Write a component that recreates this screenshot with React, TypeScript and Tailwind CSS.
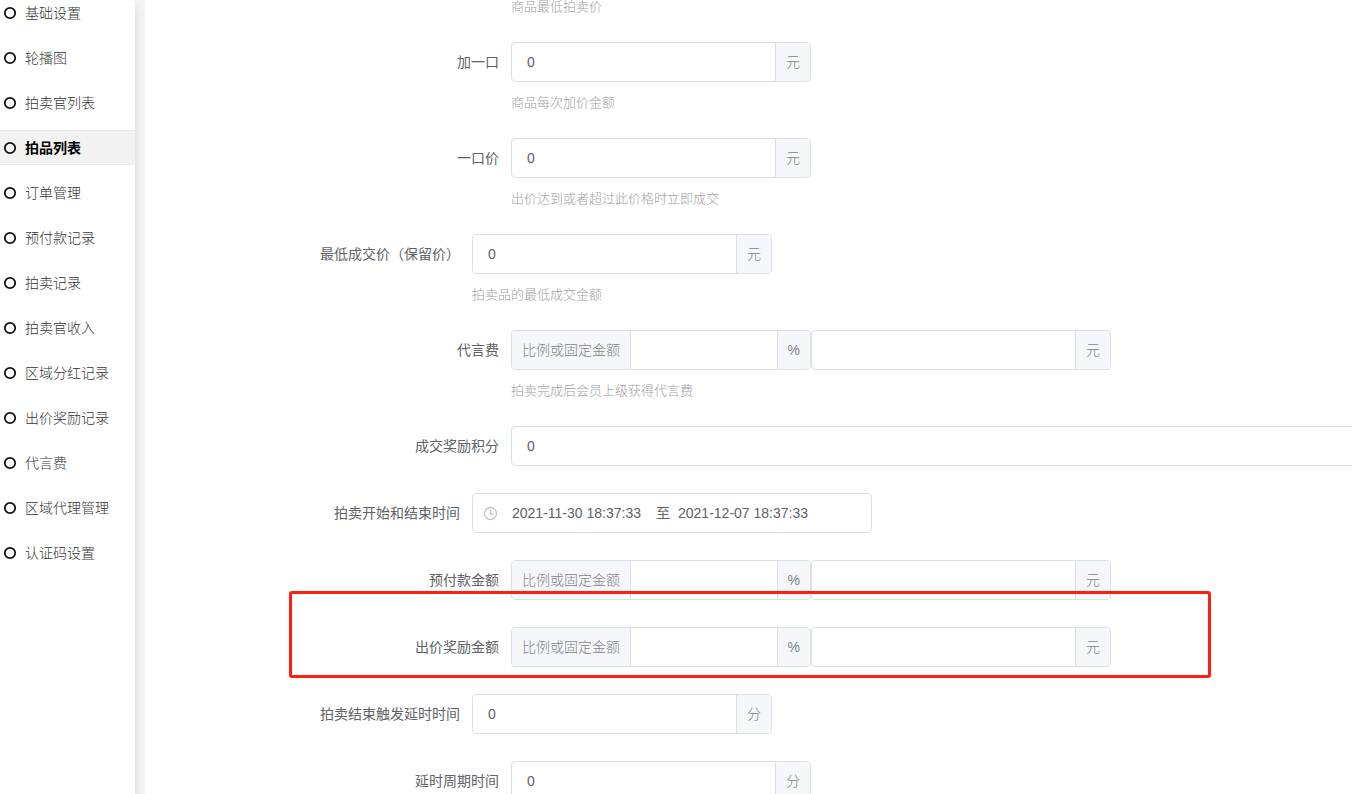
import { ReactNode } from "react";

const menu = [
  "基础设置",
  "轮播图",
  "拍卖官列表",
  "拍品列表",
  "订单管理",
  "预付款记录",
  "拍卖记录",
  "拍卖官收入",
  "区域分红记录",
  "出价奖励记录",
  "代言费",
  "区域代理管理",
  "认证码设置",
];

const Addon = ({ children, side = "right" }: { children: ReactNode; side?: "left" | "right" }) => (
  <span
    className={`flex shrink-0 items-center border-[#dcdfe6] bg-[#f5f7fa] px-[10px] font-light text-[#7f8288] ${
      side === "left" ? "border-r" : "border-l"
    }`}
  >
    {children}
  </span>
);

const InputGroup = ({
  id,
  label,
  value,
  prepend,
  append,
}: {
  id: string;
  label?: string;
  value?: string;
  prepend?: string;
  append: string;
}) => (
  <div className="flex h-10 w-[300px] shrink-0 overflow-hidden rounded border border-[#dcdfe6] bg-white">
    {prepend && <Addon side="left">{prepend}</Addon>}
    <input
      id={id}
      type="text"
      aria-label={label}
      defaultValue={value}
      className="min-w-0 flex-1 px-[15px] text-[#606266] outline-none"
    />
    <Addon>{append}</Addon>
  </div>
);

const FormItem = ({
  id,
  label,
  help,
  narrow,
  marked,
  children,
}: {
  id: string;
  label: string;
  help?: string;
  narrow?: boolean;
  marked?: boolean;
  children: ReactNode;
}) => (
  <div className="relative mb-[27px] flex">
    <label
      htmlFor={id}
      className={`h-10 shrink-0 pr-3 text-right leading-10 text-[#606266] ${narrow ? "w-[327px]" : "w-[366px]"}`}
    >
      {label}
    </label>
    <div className="min-w-0 flex-1">
      <div className="flex">{children}</div>
      {help && <p className="mt-3 text-[13px] leading-[17px] font-light text-[#a0a0a0]">{help}</p>}
    </div>
    {marked && (
      <div className="pointer-events-none absolute -top-9 -bottom-[11px] left-36 w-[922px] rounded-[3px] border-3 border-[#ff1e10]" />
    )}
  </div>
);

const RatioFields = ({ id, label }: { id: string; label: string }) => (
  <>
    <InputGroup id={id} prepend="比例或固定金额" append="%" />
    <InputGroup id={`${id}-fixed`} label={label} append="元" />
  </>
);

const App = () => {
  return (
    <div className="flex h-screen overflow-hidden bg-[#f3f3f3] font-['Liberation_Sans','Noto_Sans_CJK_SC',sans-serif] text-sm">
      {/* Sidebar */}
      <nav className="z-10 w-[135px] shrink-0 rounded-tr bg-white shadow-[0_6px_10px_rgba(0,0,0,0.12)]">
        <ul className="-mt-[5px] flex flex-col gap-[10px]">
          {menu.map((item) => {
            const active = item === "拍品列表";
            return (
              <li key={item}>
                <a
                  href="#"
                  className={`flex h-[35px] items-center gap-2 border-y pl-[3px] ${
                    active
                      ? "border-[#e8e8e8] bg-[#f2f2f2] font-bold text-black"
                      : "border-transparent font-light text-[#333]"
                  }`}
                >
                  <svg width="14" height="14" viewBox="0 0 14 14" fill="none" stroke="#111" strokeWidth="1.8">
                    <circle cx="7" cy="7" r="5.2" />
                  </svg>
                  <span>{item}</span>
                </a>
              </li>
            );
          })}
        </ul>
      </nav>

      {/* Form */}
      <main className="relative z-20 ml-[10px] min-w-0 flex-1 overflow-hidden bg-white">
        <form>
          <p className="mb-7 pl-[366px] text-[13px] leading-[14px] font-light text-[#a0a0a0]">商品最低拍卖价</p>

          <FormItem id="step" label="加一口" help="商品每次加价金额">
            <InputGroup id="step" value="0" append="元" />
          </FormItem>
          <FormItem id="buyout" label="一口价" help="出价达到或者超过此价格时立即成交">
            <InputGroup id="buyout" value="0" append="元" />
          </FormItem>
          <FormItem id="reserve" label="最低成交价（保留价）" help="拍卖品的最低成交金额" narrow>
            <InputGroup id="reserve" value="0" append="元" />
          </FormItem>
          <FormItem id="endorse" label="代言费" help="拍卖完成后会员上级获得代言费">
            <RatioFields id="endorse" label="代言费" />
          </FormItem>
          <FormItem id="points" label="成交奖励积分">
            <input
              id="points"
              type="text"
              defaultValue="0"
              className="-mr-2 h-10 flex-1 rounded border border-[#dcdfe6] px-[15px] text-[#606266] outline-none"
            />
          </FormItem>
          <FormItem id="start" label="拍卖开始和结束时间" narrow>
            <div className="flex h-10 w-[400px] items-center rounded border border-[#dcdfe6] pl-[10px] text-[#606266]">
              <svg
                className="mr-[14px] shrink-0"
                width="15"
                height="15"
                viewBox="0 0 15 15"
                fill="none"
                stroke="#c0c4cc"
                strokeWidth="1.3"
              >
                <circle cx="7.5" cy="7.5" r="6" />
                <path d="M7.5 4v4.2h3.3" />
              </svg>
              <input id="start" type="text" defaultValue="2021-11-30 18:37:33" className="w-36 outline-none" />
              <span className="mr-2">至</span>
              <input
                type="text"
                aria-label="结束时间"
                defaultValue="2021-12-07 18:37:33"
                className="w-36 outline-none"
              />
            </div>
          </FormItem>
          <FormItem id="deposit" label="预付款金额">
            <RatioFields id="deposit" label="预付款金额" />
          </FormItem>
          <FormItem id="reward" label="出价奖励金额" marked>
            <RatioFields id="reward" label="出价奖励金额" />
          </FormItem>
          <FormItem id="delay" label="拍卖结束触发延时时间" narrow>
            <InputGroup id="delay" value="0" append="分" />
          </FormItem>
          <FormItem id="cycle" label="延时周期时间">
            <InputGroup id="cycle" value="0" append="分" />
          </FormItem>
        </form>
      </main>
    </div>
  );
};

export default App;
